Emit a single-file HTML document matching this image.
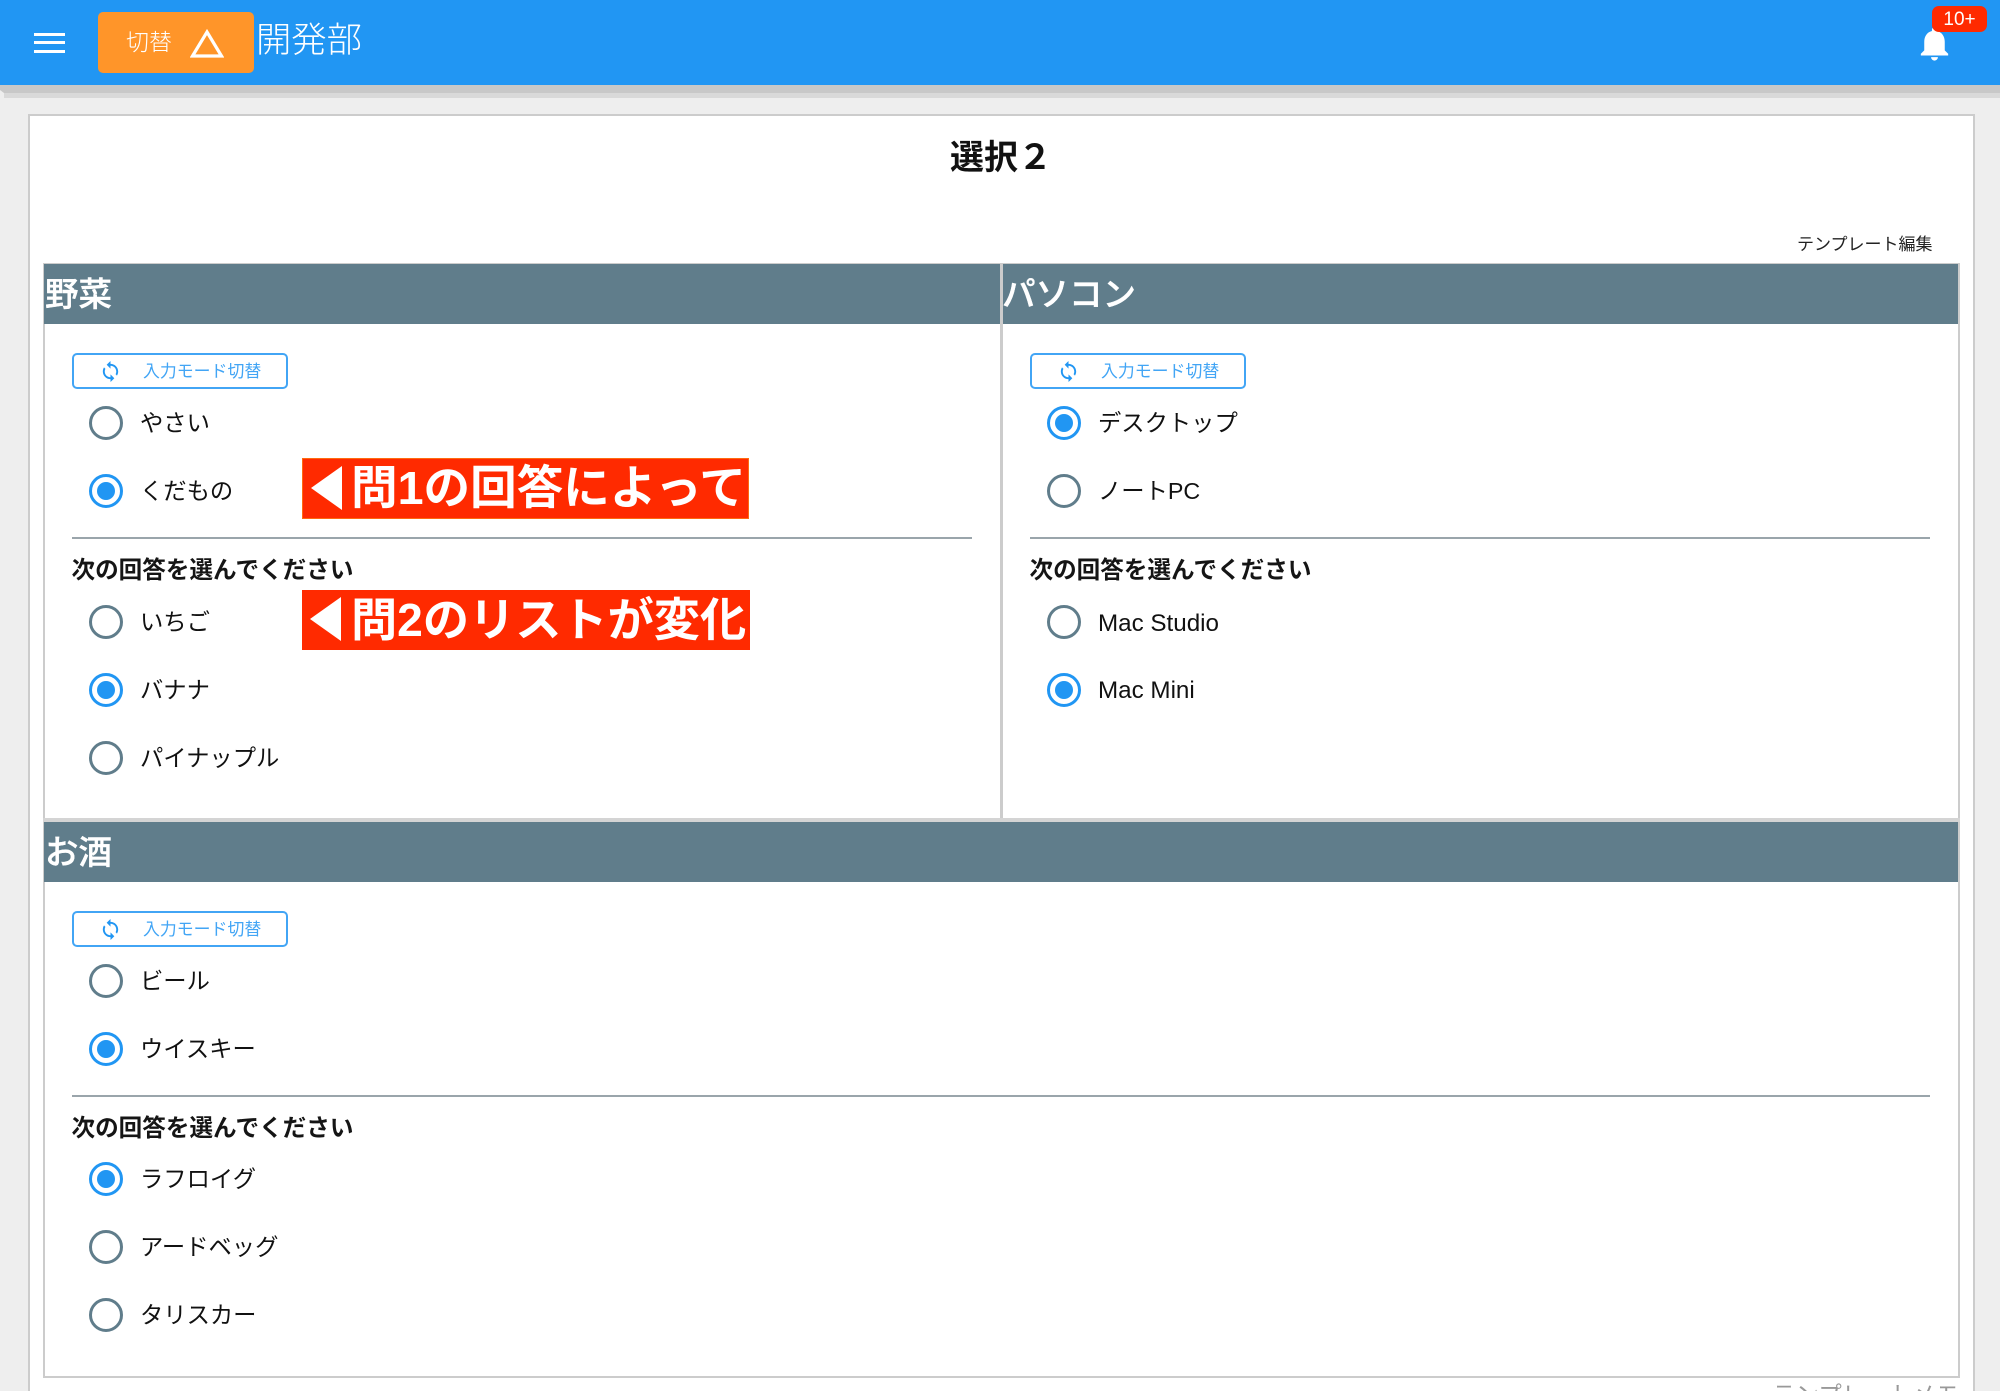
<!DOCTYPE html>
<html lang="ja"><head><meta charset="utf-8"><title>選択２</title>
<style>
html,body{margin:0;padding:0;width:2000px;height:1391px;overflow:hidden;background:#eee}
body{position:relative;font-family:"Liberation Sans","Noto Sans CJK JP",sans-serif;color:#111}
div,span,svg{position:absolute;box-sizing:border-box}
.t{white-space:nowrap;line-height:1;font-size:23.3px}
.t i{font-style:normal;font-size:24.2px}
.b{font-weight:700;font-size:23.6px;color:#151515}
.r{width:34px;height:34px;border:3px solid #607d8b;border-radius:50%;background:#fff}
.r.on{border-color:#2196f3}
.r.on::after{content:"";position:absolute;left:5px;top:5px;width:18px;height:18px;border-radius:50%;background:#2196f3}
.h{background:#607d8b;height:60px}
.ht{color:#fff;font-size:33.5px;line-height:1;white-space:nowrap;font-weight:500;-webkit-text-stroke:.4px #fff}
.btn{width:216px;height:36px;border:2px solid #42a5f5;border-radius:5px;background:#fff}
.btn span{left:69px;top:9px;font-size:16.9px;line-height:1;color:#42a5f5;white-space:nowrap}
.btn svg{left:25px;top:5px;width:23px;height:23px;fill:#2196f3}
.hr{height:2px;background:#9aa5ab}
.ban{background:#ff2a00;box-shadow:inset 0 0 0 1px #ff6a10}
.ban span{color:#fff;font-size:46.6px;font-weight:700;line-height:1;white-space:nowrap}
</style></head><body>
<div style="left:0;top:85px;width:2000px;height:13px;background:#d9d9d9"></div>
<div style="left:0;top:85px;width:2000px;height:8px;background:#c8c8c8"></div>
<svg style="left:0;top:85px;width:16px;height:13px" viewBox="0 0 16 13"><path d="M0 0H16L10 3H4L0 5Z" fill="#c8c8c8"/><path d="M0 5 L4 8 L4 13 H0Z" fill="#eee"/></svg>
<div style="left:0;top:0;width:2000px;height:85px;background:#2196f3"></div>
<div style="left:34px;top:32.5px;width:31px;height:3.4px;background:#fff"></div>
<div style="left:34px;top:41px;width:31px;height:3.4px;background:#fff"></div>
<div style="left:34px;top:49.5px;width:31px;height:3.4px;background:#fff"></div>
<div style="left:98px;top:12px;width:156px;height:61px;background:#ff9529;border-radius:5px"></div>
<div class="t" style="left:126px;top:31px;color:#fff;font-size:23px;font-weight:300">切替</div>
<svg style="left:190px;top:29px;width:34px;height:29px" viewBox="0 0 34 29"><path d="M17 3 L31.5 27 H2.5 Z" fill="none" stroke="#fff" stroke-width="3.2"/></svg>
<div class="t" style="left:256px;top:23px;color:#fff;font-size:35.3px;font-weight:300">開発部</div>
<svg style="left:1914px;top:23px;width:41px;height:41px" viewBox="0 0 24 24"><path fill="#fff" d="M12 22c1.1 0 2-.9 2-2h-4c0 1.1.89 2 2 2zm6-6v-5c0-3.07-1.64-5.64-4.5-6.32V4c0-.83-.67-1.5-1.5-1.5s-1.5.67-1.5 1.5v.68C7.63 5.36 6 7.92 6 11v5l-2 2v1h16v-1l-2-2z"/></svg>
<div style="left:1932px;top:6px;width:55px;height:26px;background:#ff2a00;border-radius:7px"></div>
<div class="t" style="left:1932px;top:10px;width:55px;text-align:center;color:#fff;font-size:19px">10+</div>

<div style="left:28px;top:114px;width:1947px;height:1300px;background:#fff;border:2px solid #ccc"></div>
<div class="t" style="left:950px;top:141px;font-size:34px;font-weight:700;color:#111">選択２</div>
<div class="t" style="left:1797px;top:236px;font-size:17px;color:#222">テンプレート編集</div>

<div style="left:43px;top:263px;width:1917px;height:1115px;border:2px solid #ccc;background:#fff"></div>
<div style="left:1000px;top:263px;width:3px;height:558px;background:#ccc"></div>
<div style="left:43px;top:818px;width:1917px;height:4px;background:#d4d4d4"></div>

<div class="h" style="left:44px;top:264px;width:956px"></div>
<div class="h" style="left:1003px;top:264px;width:955px"></div>
<div class="h" style="left:44px;top:822px;width:1914px"></div>
<div class="ht" style="left:45px;top:279px">野菜</div>
<div class="ht" style="left:1002px;top:279px">パソコン</div>
<div class="ht" style="left:45px;top:837px">お酒</div>

<div class="btn" style="left:72px;top:353px"><svg viewBox="0 0 24 24"><path d="M12 4V1L8 5l4 4V6c3.31 0 6 2.69 6 6 0 1.01-.25 1.97-.7 2.8l1.46 1.46C19.54 15.03 20 13.57 20 12c0-4.42-3.58-8-8-8zm0 14c-3.31 0-6-2.69-6-6 0-1.01.25-1.97.7-2.8L5.24 7.74C4.46 8.97 4 10.43 4 12c0 4.42 3.58 8 8 8v3l4-4-4-4v3z"/></svg><span>入力モード切替</span></div>
<div class="btn" style="left:1030px;top:353px"><svg viewBox="0 0 24 24"><path d="M12 4V1L8 5l4 4V6c3.31 0 6 2.69 6 6 0 1.01-.25 1.97-.7 2.8l1.46 1.46C19.54 15.03 20 13.57 20 12c0-4.42-3.58-8-8-8zm0 14c-3.31 0-6-2.69-6-6 0-1.01.25-1.97.7-2.8L5.24 7.74C4.46 8.97 4 10.43 4 12c0 4.42 3.58 8 8 8v3l4-4-4-4v3z"/></svg><span>入力モード切替</span></div>
<div class="btn" style="left:72px;top:911px"><svg viewBox="0 0 24 24"><path d="M12 4V1L8 5l4 4V6c3.31 0 6 2.69 6 6 0 1.01-.25 1.97-.7 2.8l1.46 1.46C19.54 15.03 20 13.57 20 12c0-4.42-3.58-8-8-8zm0 14c-3.31 0-6-2.69-6-6 0-1.01.25-1.97.7-2.8L5.24 7.74C4.46 8.97 4 10.43 4 12c0 4.42 3.58 8 8 8v3l4-4-4-4v3z"/></svg><span>入力モード切替</span></div>

<!-- section 1 -->
<div class="r" style="left:89px;top:406px"></div><div class="t" style="left:140px;top:412px">やさい</div>
<div class="r on" style="left:89px;top:474px"></div><div class="t" style="left:140px;top:480px">くだもの</div>
<div class="hr" style="left:72px;top:537px;width:900px"></div>
<div class="t b" style="left:71.5px;top:560px">次の回答を選んでください</div>
<div class="r" style="left:89px;top:605px"></div><div class="t" style="left:140px;top:611px">いちご</div>
<div class="r on" style="left:89px;top:673px"></div><div class="t" style="left:140px;top:679px">バナナ</div>
<div class="r" style="left:89px;top:741px"></div><div class="t" style="left:140px;top:747px">パイナップル</div>

<div class="ban" style="left:302px;top:458px;width:447px;height:61px">
<svg style="left:9px;top:8px;width:32px;height:44px" viewBox="0 0 32 44"><path d="M0 22 L31 0 V44 Z" fill="#fff"/></svg>
<span style="left:49px;top:7px">問1の回答によって</span></div>
<div class="ban" style="left:302px;top:590px;width:448px;height:60px;box-shadow:none">
<svg style="left:8px;top:7px;width:32px;height:44px" viewBox="0 0 32 44"><path d="M0 22 L31 0 V44 Z" fill="#fff"/></svg>
<span style="left:49px;top:7px;font-size:46.2px">問2のリストが変化</span></div>

<!-- section 2 -->
<div class="r on" style="left:1047px;top:406px"></div><div class="t" style="left:1098px;top:412px">デスクトップ</div>
<div class="r" style="left:1047px;top:474px"></div><div class="t" style="left:1098px;top:480px">ノートPC</div>
<div class="hr" style="left:1030px;top:537px;width:900px"></div>
<div class="t b" style="left:1029.5px;top:560px">次の回答を選んでください</div>
<div class="r" style="left:1047px;top:605px"></div><div class="t" style="left:1098px;top:612px"><i>Mac Studio</i></div>
<div class="r on" style="left:1047px;top:673px"></div><div class="t" style="left:1098px;top:679px"><i>Mac Mini</i></div>

<!-- section 3 -->
<div class="r" style="left:89px;top:964px"></div><div class="t" style="left:140px;top:970px">ビール</div>
<div class="r on" style="left:89px;top:1032px"></div><div class="t" style="left:140px;top:1038px">ウイスキー</div>
<div class="hr" style="left:72px;top:1095px;width:1858px"></div>
<div class="t b" style="left:71.5px;top:1118px">次の回答を選んでください</div>
<div class="r on" style="left:89px;top:1162px"></div><div class="t" style="left:140px;top:1168px">ラフロイグ</div>
<div class="r" style="left:89px;top:1230px"></div><div class="t" style="left:140px;top:1236px">アードベッグ</div>
<div class="r" style="left:89px;top:1298px"></div><div class="t" style="left:140px;top:1304px">タリスカー</div>

<div class="t" style="left:1772px;top:1384px;color:#999;font-size:23.5px">テンプレートメモ</div>
</body></html>
